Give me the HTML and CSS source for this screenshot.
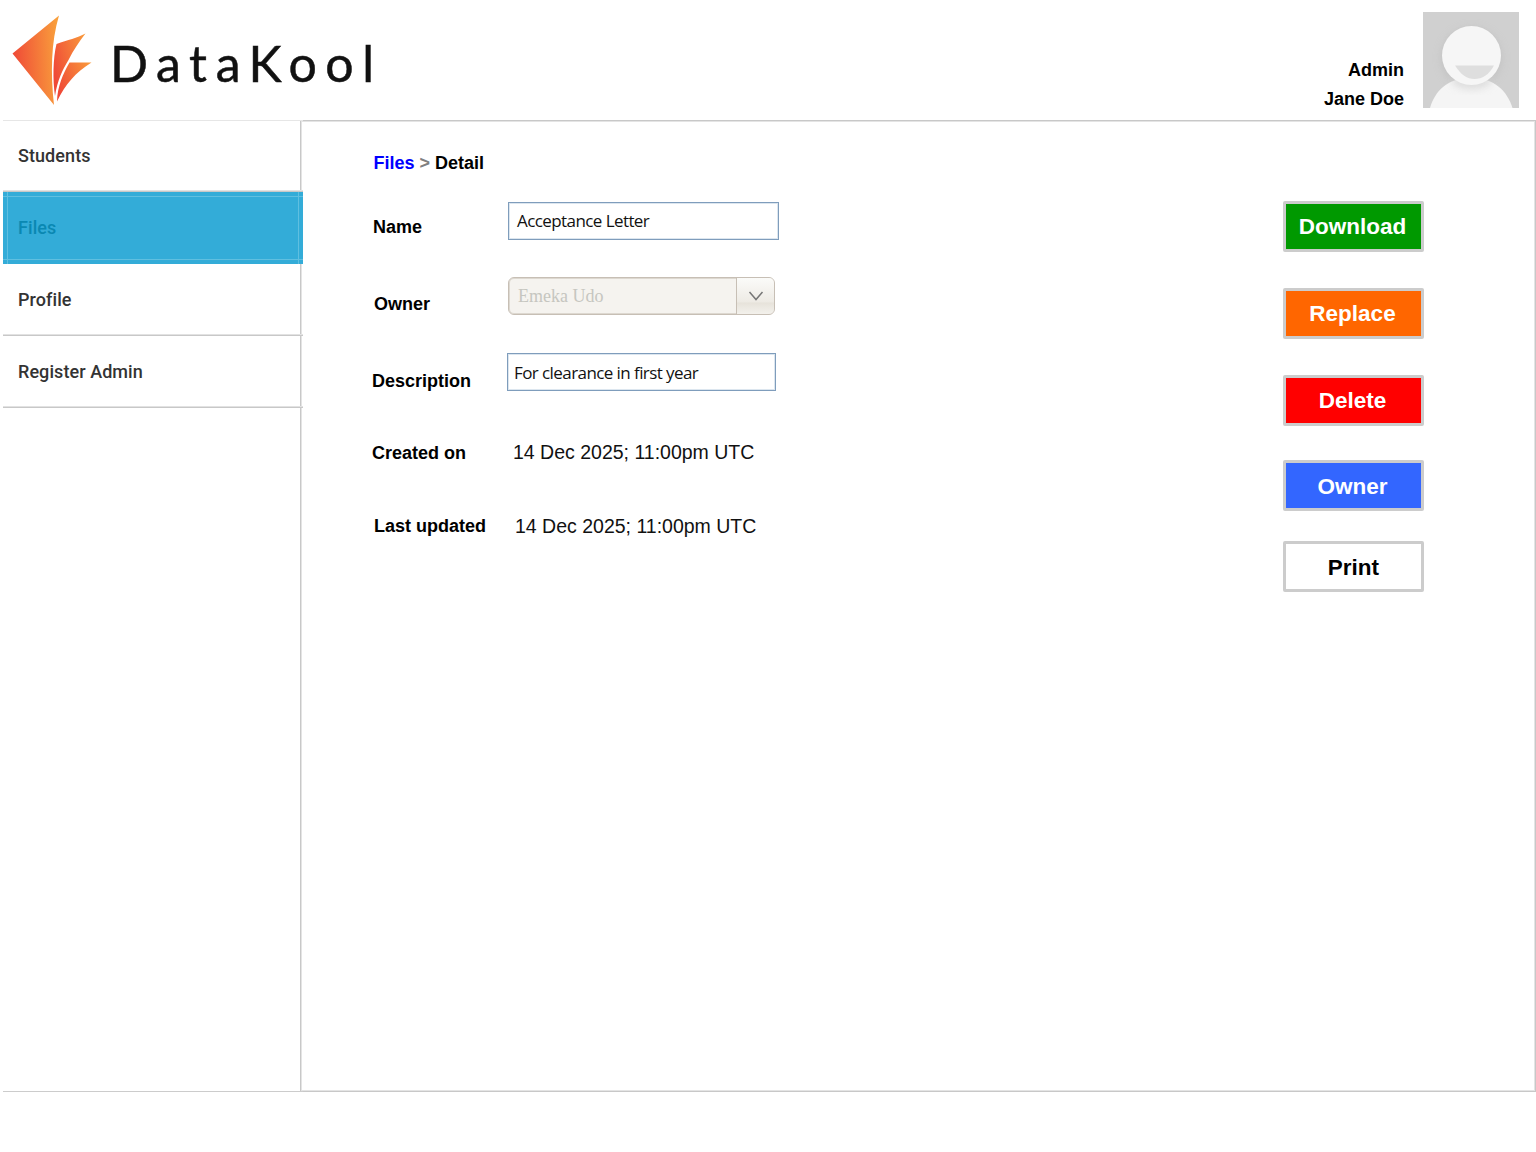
FILE: index.html
```html
<!DOCTYPE html>
<html lang="en">
<head>
<meta charset="utf-8">
<title>DataKool – File detail</title>
<link rel="stylesheet" href="styles.css">
</head>
<body>
<header class="header">
  <div class="brand">
    <svg class="brand-mark" width="82" height="92" viewBox="0 0 82 92" aria-hidden="true">
      <defs>
        <linearGradient id="g1" x1="0" y1=".5" x2="1" y2=".4"><stop offset="0" stop-color="#ef4937"/><stop offset="1" stop-color="#f9a03c"/></linearGradient>
        <linearGradient id="g2" x1="0" y1=".6" x2="1" y2=".1"><stop offset="0" stop-color="#ef4937"/><stop offset="1" stop-color="#f9983b"/></linearGradient>
      </defs>
      <path fill="url(#g1)" d="M48 1.500 1.500 39.500 43 91C39.500 59 40 28 48 1.500Z"/>
      <path fill="url(#g2)" d="M74.500 19.500C66 24 57 26 45.500 30C42 44 41.500 66 44 82C46.500 66 51.500 56 57.500 46C62.500 36 68 28 74.500 19.500Z"/>
      <path fill="url(#g2)" d="M80.500 48.500H58.500C52 60 46.500 72 46 87.500C54.500 70 64 59 80.500 48.500Z"/>
    </svg>
    <span class="brand-name">DataKool</span>
  </div>
  <div class="user">
    <div class="user-text"><div>Admin</div><div>Jane Doe</div></div>
    <svg class="avatar" width="96" height="96" viewBox="0 0 96 96" aria-hidden="true">
      <defs><filter id="soft" x="-30%" y="-30%" width="160%" height="160%"><feGaussianBlur stdDeviation="4"/></filter></defs>
      <rect width="96" height="96" fill="#d0d0d0"/>
      <circle cx="48.500" cy="46" r="30" fill="#b8b8b8" opacity=".6" filter="url(#soft)"/>
      <path fill="#f5f5f5" d="M7 96C12 79 24 66 48 66S84 79 89.500 96Z"/>
      <ellipse cx="48.500" cy="68" rx="20" ry="9" fill="#d5d5d5" opacity=".8" filter="url(#soft)"/>
      <circle cx="48.500" cy="43.500" r="29.500" fill="#f6f6f6"/>
      <path fill="#dedede" d="M32 53.500H71C66 63 59 67 51.500 67S38 63 32 53.500Z"/>
    </svg>
  </div>
</header>
<div class="layout">
  <nav class="sidebar">
    <a class="nav-item">Students</a>
    <a class="nav-item active">Files</a>
    <a class="nav-item">Profile</a>
    <a class="nav-item">Register Admin</a>
  </nav>
  <main class="main">
    <section class="details">
      <div class="crumbs"><a class="crumb-link">Files</a> <span class="crumb-sep">&gt;</span> Detail</div>
      <div class="row row-name"><span class="label">Name</span><div class="field">Acceptance Letter</div></div>
      <div class="row row-owner"><span class="label">Owner</span>
        <div class="select"><span class="select-value">Emeka Udo</span>
          <span class="select-button"><svg width="16" height="12" viewBox="0 0 16 12"><path d="M1.500 2 8 9.500 14.500 2" fill="none" stroke="#777" stroke-width="1.500"/></svg></span>
        </div>
      </div>
      <div class="row row-description"><span class="label">Description</span><div class="field">For clearance in first year</div></div>
      <div class="row row-created"><span class="label">Created on</span><span class="value">14 Dec 2025; 11:00pm UTC</span></div>
      <div class="row row-updated"><span class="label">Last updated</span><span class="value">14 Dec 2025; 11:00pm UTC</span></div>
    </section>
    <aside class="actions">
      <button class="btn download">Download</button>
      <button class="btn replace">Replace</button>
      <button class="btn delete">Delete</button>
      <button class="btn owner">Owner</button>
      <button class="btn print">Print</button>
    </aside>
  </main>
</div>
</body>
</html>
```
FILE: styles.css
```css
* { box-sizing: border-box; }
body {
  margin: 0;
  height: 1152px;
  background: #fff;
  color: #000;
  font-family: "Liberation Sans", Arial, sans-serif;
  overflow: hidden;
}
.header {
  display: flex;
  justify-content: space-between;
  height: 120px;
  padding: 0 17px 0 11px;
}
.brand { display: flex; }
.brand-mark { margin-top: 14px; }
.brand-name {
  margin: 33px 0 0 17px;
  font: 400 50px/60px Lato, sans-serif;
  letter-spacing: 8.6px;
  color: #111;
  -webkit-text-stroke: .5px #111;
}
.user { display: flex; gap: 19px; padding-top: 12px; }
.user-text {
  padding-top: 44px;
  text-align: right;
  font-weight: bold;
  font-size: 18px;
  line-height: 29px;
}
.layout { display: flex; height: 972px; padding-left: 3px; }
.sidebar {
  position: relative;
  z-index: 1;
  width: 300px;
  border-top: 1px solid #e6e6e6;
  border-bottom: 1px solid #ccc;
}
.nav-item {
  display: flex;
  align-items: center;
  height: 72px;
  padding-left: 15px;
  border-bottom: 1px solid #c8c8c8;
  box-shadow: inset 0 -1px #e2e2e2;
  font: 500 18px/22px Roboto, sans-serif;
  letter-spacing: .07px;
  color: #333;
}
.nav-item:first-child { height: 71px; }
.nav-item.active {
  border: 0;
  background:
    linear-gradient(#5fbfe0, #5fbfe0) 0 4px / 100% 1px no-repeat,
    linear-gradient(#5fbfe0, #5fbfe0) 0 67px / 100% 1px no-repeat,
    linear-gradient(#5fbfe0, #5fbfe0) 4px 0 / 1px 100% no-repeat,
    linear-gradient(#5fbfe0, #5fbfe0) 295px 0 / 1px 100% no-repeat,
    #33acd8;
  box-shadow: none;
  color: #0a88b2;
}
.main {
  display: flex;
  justify-content: space-between;
  flex: 1;
  margin-left: -3px;
  border: 1px solid #c8c8c8;
  box-shadow: inset 1px 1px #e4e4e4, inset -1px -1px #e4e4e4;
  padding: 0 111px 0 71px;
}
.details { width: 420px; }
.crumbs {
  margin: 31px 0 28px 1.5px;
  font-size: 18px;
  line-height: 22px;
  font-weight: bold;
}
.crumb-link { color: #00f; }
.crumb-sep { color: #808080; }
.row { display: flex; }
.label {
  flex: none;
  width: 135px;
  font-size: 18px;
  line-height: 22px;
  font-weight: bold;
}
.row-name { height: 75px; padding-left: 1px; }
.row-owner { height: 76px; padding-left: 2px; }
.row-owner .label { width: 134px; }
.row-description { height: 88px; }
.row-created { height: 73px; }
.row-updated { padding-left: 2px; }
.row-name .label { padding-top: 14px; }
.row-owner .label { padding-top: 16px; }
.row-description .label { padding-top: 17px; }
.row-created .label, .row-updated .label { padding-top: 1px; }
.row-updated .value { padding-top: 1px; }
.field {
  width: 271px;
  height: 38px;
  padding-left: 8px;
  border: 1px solid #7f9dbc;
  box-shadow: inset 0 0 0 1px #dce6ef;
  font: 400 17px/36px "Open Sans", "Noto Sans", sans-serif;
  letter-spacing: -.58px;
  color: #111;
}
.row-description .field {
  width: 269px;
  padding-left: 6px;
  line-height: 38px;
}
.select {
  display: flex;
  width: 267px;
  height: 38px;
  border: 1px solid #c7bfb5;
  border-radius: 6px;
  box-shadow: inset 0 0 0 1px #ddd8d0;
  background: #f5f3ef;
  overflow: hidden;
}
.select-value {
  flex: 1;
  padding-left: 9px;
  font: 18px/36px "Liberation Serif", serif;
  color: #c6c6c0;
}
.select-button {
  display: flex;
  align-items: center;
  justify-content: center;
  width: 38px;
  border-left: 1px solid #c7bfb5;
  background: linear-gradient(#fbfbf9, #eeebe5 65%, #e7e3db 70%, #f3f1ec);
}
.value { margin-left: 6px; font-size: 19.5px; line-height: 22px; color: #111; }
.actions { width: 141px; padding-top: 80px; }
.btn {
  display: block;
  width: 141px;
  height: 51px;
  margin: 0 0 36px;
  padding: 0 2px 0 0;
  border: 3px solid #ccc;
  border-radius: 2px;
  color: #fff;
  font: bold 22.500px/43px "Liberation Sans", Arial, sans-serif;
}
.download { background: #090; }
.replace { background: #f60; }
.delete { margin-bottom: 34px; background: red; }
.owner { margin-bottom: 30px; padding-top: 1px; background: #36f; }
.print { padding: 1px 0 0; background: #fff; color: #000; }
```
